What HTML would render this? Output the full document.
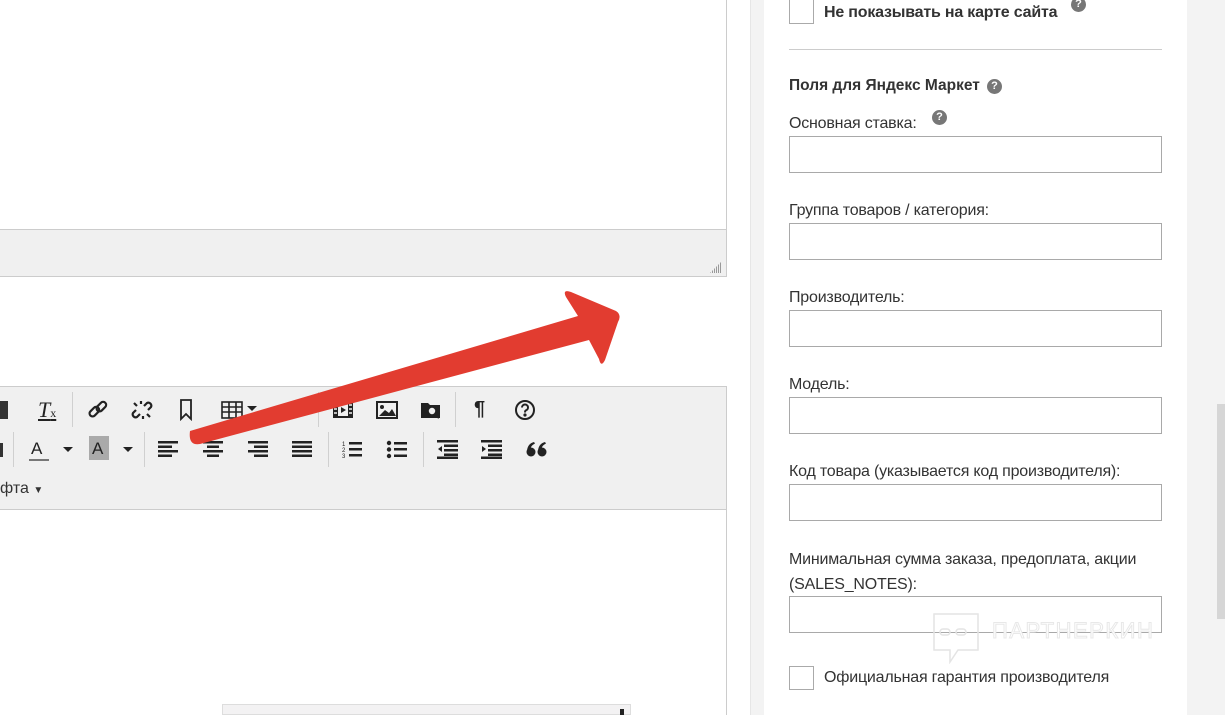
<!DOCTYPE html>
<html><head><meta charset="utf-8"><style>
*{box-sizing:border-box;margin:0;padding:0}
body{width:1225px;height:715px;overflow:hidden;background:#fff;position:relative;font-family:"Liberation Sans","DejaVu Sans",sans-serif;color:#333}
.a{position:absolute}
.lbl{position:absolute;left:789px;font-size:16px;color:#333;letter-spacing:-0.2px}
.inp{position:absolute;left:789px;width:373px;height:37px;border:1px solid #a9a9a9;background:#fff}
.q{position:absolute;width:15px;height:15px;border-radius:50%;background:#777;color:#fff;font-size:11px;font-weight:bold;text-align:center;line-height:15px}
.ic{position:absolute;color:#222}
.sep{position:absolute;width:1px;background:#d0d0d0}
</style></head><body>
<div class="a" style="left:0;top:0;width:727px;height:277px;border-right:1px solid #ccc;border-bottom:1px solid #ccc"></div>
<div class="a" style="left:0;top:229px;width:726px;height:47px;background:#f0f0f0;border-top:1px solid #ccc"></div>
<div class="a" style="left:710px;top:261px;width:12px;height:12px;background:repeating-linear-gradient(90deg,#999 0 1px,transparent 1px 2px);clip-path:polygon(100% 0,100% 100%,0 100%)"></div>
<div class="a" style="left:0;top:386px;width:727px;height:329px;border-right:1px solid #ccc;border-top:1px solid #ccc"></div>
<div class="a" style="left:0;top:387px;width:726px;height:123px;background:#f0f0f0;border-bottom:1px solid #ccc"></div>
<div class="a" style="left:222px;top:704px;width:409px;height:11px;background:#f3f2f3;border:1px solid #ddd"></div>
<div class="a" style="left:620px;top:709px;width:4px;height:6px;background:#222"></div>
<div class="ic" style="left:0;top:401px;width:8px;height:18px;background:#333"></div>
<div class="ic" style="left:38px;top:397px;font:italic 22px 'Liberation Serif',serif;text-decoration:underline">T<span style="font-size:12px;font-style:normal">x</span></div>
<div class="sep" style="left:72px;top:392px;height:35px"></div>
<svg class="a" style="left:87px;top:399px" width="22" height="22" viewBox="0 0 22 22" fill="none" stroke="#222" stroke-width="2.2"><rect x="2" y="10" width="11" height="6" rx="3" transform="rotate(-45 7 13)"/><rect x="9" y="5" width="11" height="6" rx="3" transform="rotate(-45 14 8)"/></svg>
<svg class="a" style="left:131px;top:399px" width="22" height="22" viewBox="0 0 22 22" fill="none" stroke="#222" stroke-width="2.2"><path d="M9 15l-3 3a3 3 0 0 1-4-4l3-3M13 7l3-3a3 3 0 0 1 4 4l-3 3M3 4l3 3M16 15l3 3M10 2v3M12 17v3"/></svg>
<svg class="a" style="left:179px;top:399px" width="14" height="22" viewBox="0 0 14 22" fill="none" stroke="#222" stroke-width="1.8"><path d="M2 1h10v19l-5-5-5 5z"/></svg>
<svg class="a" style="left:221px;top:401px" width="22" height="18" viewBox="0 0 22 18" fill="none" stroke="#222" stroke-width="1.6"><rect x="1" y="1" width="20" height="16"/><path d="M1 6h20M1 11h20M8 1v16M15 1v16"/></svg>
<div class="ic" style="left:247px;top:406px;border:5px solid transparent;border-top:5px solid #222;width:0;height:0"></div>
<div class="sep" style="left:318px;top:392px;height:35px"></div>
<svg class="a" style="left:332px;top:401px" width="22" height="18" viewBox="0 0 22 18"><rect x="1" y="1" width="20" height="16" fill="#222"/><rect x="6" y="3" width="10" height="12" fill="#f0f0f0"/><path d="M9 6l5 3-5 3z" fill="#222"/><path d="M2 4h3M2 8h3M2 12h3M17 4h3M17 8h3M17 12h3" stroke="#f0f0f0" stroke-width="1.5"/></svg>
<svg class="a" style="left:376px;top:401px" width="22" height="18" viewBox="0 0 22 18"><rect x="1" y="1" width="20" height="16" fill="none" stroke="#222" stroke-width="2"/><circle cx="6" cy="6" r="2" fill="#222"/><path d="M3 15l6-6 4 3 3-4 4 7z" fill="#222"/></svg>
<svg class="a" style="left:420px;top:400px" width="22" height="20" viewBox="0 0 22 20"><path d="M1 3h7l2 2h10v13H1z" fill="#222"/><circle cx="12" cy="11" r="4" fill="#f0f0f0" stroke="#222" stroke-width="1.6"/><path d="M15 14l4 4" stroke="#222" stroke-width="2.2"/></svg>
<div class="sep" style="left:455px;top:392px;height:35px"></div>
<div class="ic" style="left:474px;top:398px;font:bold 20px 'Liberation Sans',sans-serif">¶</div>
<svg class="a" style="left:514px;top:399px" width="22" height="22" viewBox="0 0 22 22" fill="none" stroke="#222" stroke-width="2"><circle cx="11" cy="11" r="9"/><path d="M8 8.5a3 3 0 1 1 4 2.8c-1 .4-1 1-1 2.2"/><circle cx="11" cy="16" r=".6" fill="#222"/></svg>
<div class="ic" style="left:0;top:443px;width:3px;height:14px;background:#333"></div>
<div class="sep" style="left:13px;top:432px;height:35px"></div>
<div class="ic" style="left:31px;top:439px;font:17px 'Liberation Sans',sans-serif">A</div>
<div class="a" style="left:29px;top:459px;width:20px;height:2px;background:#777"></div>
<div class="ic" style="left:63px;top:447px;border:5px solid transparent;border-top:5px solid #222"></div>
<div class="a" style="left:89px;top:436px;width:20px;height:24px;background:#aaa"></div>
<div class="ic" style="left:92px;top:439px;font:17px 'Liberation Sans',sans-serif">A</div>
<div class="ic" style="left:123px;top:447px;border:5px solid transparent;border-top:5px solid #222"></div>
<div class="sep" style="left:144px;top:432px;height:35px"></div>
<svg class="a" style="left:158px;top:441px" width="22" height="17" viewBox="0 0 22 17" fill="#222"><rect y="0" width="20" height="2.5"/><rect y="4.5" width="14" height="2.5"/><rect y="9" width="20" height="2.5"/><rect y="13.5" width="14" height="2.5"/></svg>
<svg class="a" style="left:202px;top:441px" width="22" height="17" viewBox="0 0 22 17" fill="#222"><rect x="1" y="0" width="20" height="2.5"/><rect x="5" y="4.5" width="12" height="2.5"/><rect x="1" y="9" width="20" height="2.5"/><rect x="5" y="13.5" width="12" height="2.5"/></svg>
<svg class="a" style="left:247px;top:441px" width="22" height="17" viewBox="0 0 22 17" fill="#222"><rect x="1" y="0" width="20" height="2.5"/><rect x="7" y="4.5" width="14" height="2.5"/><rect x="1" y="9" width="20" height="2.5"/><rect x="7" y="13.5" width="14" height="2.5"/></svg>
<svg class="a" style="left:291px;top:441px" width="22" height="17" viewBox="0 0 22 17" fill="#222"><rect x="1" y="0" width="20" height="2.5"/><rect x="1" y="4.5" width="20" height="2.5"/><rect x="1" y="9" width="20" height="2.5"/><rect x="1" y="13.5" width="20" height="2.5"/></svg>
<div class="sep" style="left:328px;top:432px;height:35px"></div>
<svg class="a" style="left:342px;top:440px" width="22" height="19" viewBox="0 0 22 19" fill="#222"><text x="0" y="6" font-size="6" font-family="Liberation Sans">1</text><text x="0" y="12" font-size="6" font-family="Liberation Sans">2</text><text x="0" y="18" font-size="6" font-family="Liberation Sans">3</text><rect x="7" y="2" width="13" height="2.5"/><rect x="7" y="8" width="13" height="2.5"/><rect x="7" y="14" width="13" height="2.5"/></svg>
<svg class="a" style="left:386px;top:440px" width="22" height="19" viewBox="0 0 22 19" fill="#222"><circle cx="3" cy="3" r="2.2"/><circle cx="3" cy="9.5" r="2.2"/><circle cx="3" cy="16" r="2.2"/><rect x="8" y="2" width="13" height="2.5"/><rect x="8" y="8" width="13" height="2.5"/><rect x="8" y="14.5" width="13" height="2.5"/></svg>
<div class="sep" style="left:423px;top:432px;height:35px"></div>
<svg class="a" style="left:437px;top:440px" width="22" height="19" viewBox="0 0 22 19" fill="#222"><rect x="0" y="0" width="21" height="2.5"/><rect x="7" y="4.5" width="14" height="2.5"/><rect x="7" y="9" width="14" height="2.5"/><rect x="7" y="13.5" width="14" height="2.5"/><rect x="0" y="16.5" width="21" height="2.5"/><path d="M5 6v6l-4-3z"/></svg>
<svg class="a" style="left:481px;top:440px" width="22" height="19" viewBox="0 0 22 19" fill="#222"><rect x="0" y="0" width="21" height="2.5"/><rect x="7" y="4.5" width="14" height="2.5"/><rect x="7" y="9" width="14" height="2.5"/><rect x="7" y="13.5" width="14" height="2.5"/><rect x="0" y="16.5" width="21" height="2.5"/><path d="M1 6v6l4-3z"/></svg>
<svg class="a" style="left:526px;top:441px" width="22" height="16" viewBox="0 0 22 16" fill="#222"><circle cx="5" cy="11" r="4.5"/><path d="M1 11c0-6 3-9 7-10l1 1.5c-3 1.5-4.5 3.5-4.5 6z"/><circle cx="16" cy="11" r="4.5"/><path d="M12 11c0-6 3-9 7-10l1 1.5c-3 1.5-4.5 3.5-4.5 6z"/></svg>
<div class="ic" style="left:0;top:480px;font-size:16px;color:#333">фта <span style="font-size:10px">▼</span></div>
<div class="a" style="left:750px;top:0;width:475px;height:715px;background:#f3f3f3"></div>
<div class="a" style="left:750px;top:0;width:1px;height:715px;background:#e6e6e6"></div>
<div class="a" style="left:764px;top:0;width:423px;height:715px;background:#fff"></div>
<div class="a" style="left:1217px;top:404px;width:8px;height:215px;background:#d6d6d6"></div>
<div class="a" style="left:789px;top:0;width:25px;height:24px;border:1px solid #aaa;border-top:none;background:#fff"></div>
<div class="lbl" style="left:824px;top:4px;font-weight:bold;font-size:16px;color:#333">Не показывать на карте сайта</div>
<div class="q" style="left:1071px;top:-3px">?</div>
<div class="a" style="left:789px;top:49px;width:373px;height:1px;background:#ccc"></div>
<div class="lbl" style="top:77px;font-weight:bold;font-size:15.5px;letter-spacing:0">Поля для Яндекс Маркет</div>
<div class="q" style="left:987px;top:79px">?</div>
<div class="lbl" style="top:115px">Основная ставка:</div>
<div class="q" style="left:932px;top:110px">?</div>
<div class="inp" style="top:136px"></div>
<div class="lbl" style="top:202px">Группа товаров / категория:</div>
<div class="inp" style="top:223px"></div>
<div class="lbl" style="top:289px">Производитель:</div>
<div class="inp" style="top:310px"></div>
<div class="lbl" style="top:376px">Модель:</div>
<div class="inp" style="top:397px"></div>
<div class="lbl" style="top:463px">Код товара (указывается код производителя):</div>
<div class="inp" style="top:484px"></div>
<div class="lbl" style="top:547px;line-height:25px">Минимальная сумма заказа, предоплата, акции<br>(SALES_NOTES):</div>
<div class="inp" style="top:596px"></div>
<svg class="a" style="left:932px;top:612px" width="48" height="52" viewBox="0 0 48 52" fill="none" stroke="#e4e4e4" stroke-width="1.5"><path d="M2 2h44v36H26l-8 12v-12H2z"/><rect x="8" y="17" width="10" height="6" rx="3"/><rect x="24" y="17" width="10" height="6" rx="3"/></svg>
<div class="a" style="left:992px;top:618px;font-size:22px;color:#fff;-webkit-text-stroke:1px #e8e8e8;letter-spacing:1.5px">ПАРТНЕРКИН</div>
<div class="a" style="left:789px;top:666px;width:25px;height:24px;border:1px solid #aaa"></div>
<div class="lbl" style="left:824px;top:669px">Официальная гарантия производителя</div>
<svg class="a" style="left:0;top:0" width="1225" height="715" viewBox="0 0 1225 715">
<path d="M190 431 L578 316 L566 297 Q562 289 571 292 L616 311 Q622 315 618 322 L605 360 Q601 368 599 359 L589 340 L200 444 Q188 446 190 431Z" fill="#e23c30"/>
</svg>
</body></html>
